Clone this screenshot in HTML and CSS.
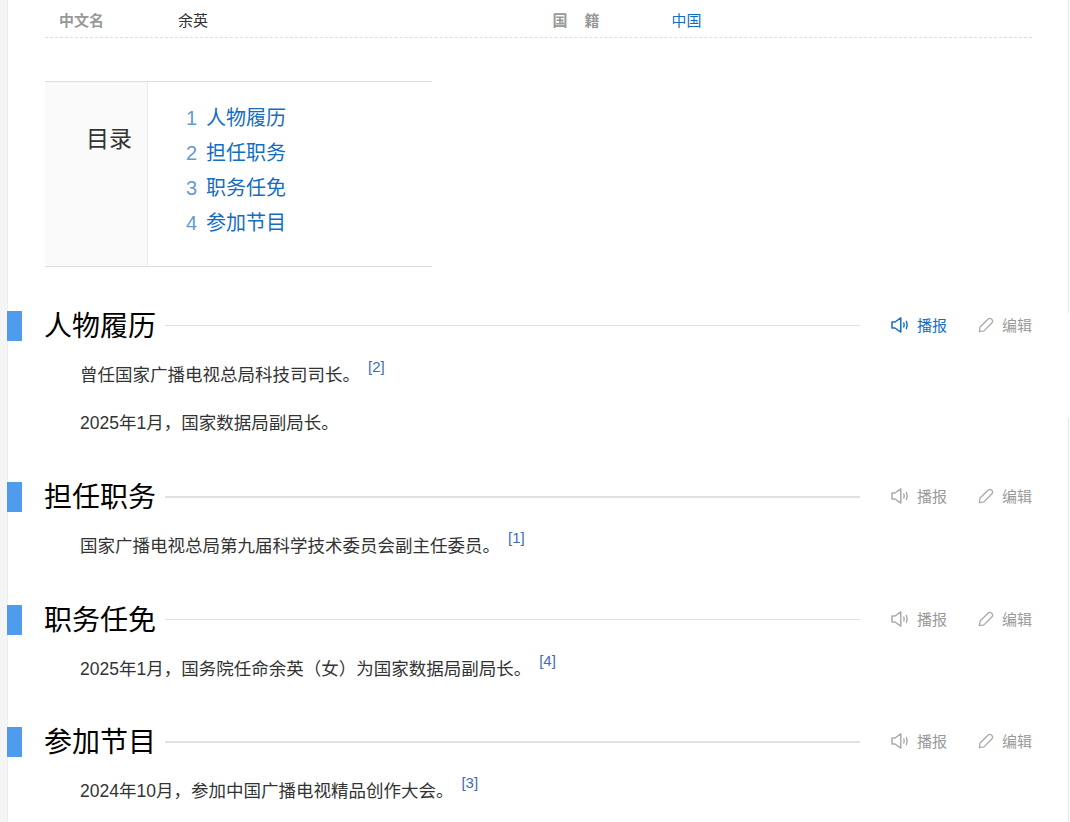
FILE: index.html
```html
<!DOCTYPE html>
<html lang="zh-CN">
<head>
  <meta charset="UTF-8" />
  <title>余英</title>
  <link rel="stylesheet" href="styles.css">
</head>
<body>
  <svg class="icon-defs" width="0" height="0">
    <symbol id="icon-sound" viewBox="0 0 18 16">
      <path d="M1 5h3L9.800 .9v14.200L4 11H1z" fill="none" stroke="currentColor" stroke-width="1.500" stroke-linejoin="round"/>
      <path d="M12.800 6c.5 1.300.5 2.700 0 4M15.400 4.400c1 2.300 1 4.900 0 7.200" fill="none" stroke="currentColor" stroke-width="1.400" stroke-linecap="round"/>
    </symbol>
    <symbol id="icon-edit" viewBox="0 0 16 16">
      <path d="M1.300 14.700L2.100 10 10 2.300a2.600 2.600 0 0 1 3.700 3.700L6 13.900z" fill="none" stroke="currentColor" stroke-width="1.300" stroke-linejoin="round"/>
    </symbol>
  </svg>

  <div class="edge edge-top"></div>
  <div class="edge edge-bottom"></div>

  <div class="page">
    <div class="basic-info">
      <div class="info-item">
        <span class="info-name">中文名</span>
        <span class="info-value">余英</span>
      </div>
      <div class="info-item">
        <span class="info-name">国<span class="name-gap"></span>籍</span>
        <a class="info-value link" href="#">中国</a>
      </div>
    </div>

    <div class="catalog">
      <div class="catalog-title">目录</div>
      <ol class="catalog-list">
        <li><span class="num">1</span><a href="#">人物履历</a></li>
        <li><span class="num">2</span><a href="#">担任职务</a></li>
        <li><span class="num">3</span><a href="#">职务任免</a></li>
        <li><span class="num">4</span><a href="#">参加节目</a></li>
      </ol>
    </div>

    <div class="section first">
      <div class="heading">
        <h2>人物履历</h2>
        <div class="rule"></div>
        <a class="tool active" href="#"><svg class="sound"><use href="#icon-sound"/></svg>播报</a>
        <a class="tool" href="#"><svg class="edit"><use href="#icon-edit"/></svg>编辑</a>
      </div>
      <p>曾任国家广播电视总局科技司司长。<sup>[2]</sup></p>
      <p>2025年1月，国家数据局副局长。</p>
    </div>

    <div class="section">
      <div class="heading">
        <h2>担任职务</h2>
        <div class="rule thick"></div>
        <a class="tool" href="#"><svg class="sound"><use href="#icon-sound"/></svg>播报</a>
        <a class="tool" href="#"><svg class="edit"><use href="#icon-edit"/></svg>编辑</a>
      </div>
      <p>国家广播电视总局第九届科学技术委员会副主任委员。<sup>[1]</sup></p>
    </div>

    <div class="section">
      <div class="heading">
        <h2>职务任免</h2>
        <div class="rule"></div>
        <a class="tool" href="#"><svg class="sound"><use href="#icon-sound"/></svg>播报</a>
        <a class="tool" href="#"><svg class="edit"><use href="#icon-edit"/></svg>编辑</a>
      </div>
      <p>2025年1月，国务院任命余英（女）为国家数据局副局长。<sup>[4]</sup></p>
    </div>

    <div class="section fourth">
      <div class="heading">
        <h2>参加节目</h2>
        <div class="rule thick"></div>
        <a class="tool" href="#"><svg class="sound"><use href="#icon-sound"/></svg>播报</a>
        <a class="tool" href="#"><svg class="edit"><use href="#icon-edit"/></svg>编辑</a>
      </div>
      <p>2024年10月，参加中国广播电视精品创作大会。<sup>[3]</sup></p>
    </div>
  </div>
</body>
</html>
```

FILE: styles.css
```css
* {
  box-sizing: border-box;
}

html, body {
  height: 100%;
}

body {
  margin: 0;
  background: #fff;
  overflow: hidden;
  font-family: Arial, "Liberation Sans", "Noto Sans CJK SC", sans-serif;
  color: #333;
}

a {
  text-decoration: none;
}

.icon-defs {
  position: absolute;
}

/* the cut off line on the right side of the window */
.edge {
  position: absolute;
  left: 1068px;
  width: 1px;
  background: #e6e6e6;
}

.edge-top {
  top: 0;
  height: 313px;
}

.edge-bottom {
  top: 418px;
  bottom: 0;
}

.page {
  height: 822px;
  margin-left: 7px;
  margin-right: 1px;
  padding-right: 37px;
  border-left: 1px solid #eee;
  box-shadow: -7px 0 0 #f5f5f5;
}

.basic-info {
  display: flex;
  height: 38px;
  margin-left: 37px;
  border-bottom: 1px dashed #ddd;
}

.info-item {
  display: flex;
  width: 494px;
  height: 37px;
  align-items: center;
  padding: 2px 0 0 14px;
  font-size: 15px;
}

.info-name {
  width: 119px;
  color: #999;
  font-weight: bold;
}

.name-gap {
  display: inline-block;
  width: 17px;
}

.info-value {
  color: #333;
}

.link {
  color: #136ec2;
}

.catalog {
  display: flex;
  width: 387px;
  height: 186px;
  margin: 43px 0 0 37px;
  border-top: 1px solid #ddd;
  border-bottom: 1px solid #ddd;
}

.catalog-title {
  width: 103px;
  padding: 42px 15px 0 0;
  background: #fafafa;
  border-right: 1px solid #eee;
  font-size: 23px;
  line-height: 30px;
  text-align: right;
}

.catalog-list {
  margin: 0;
  padding: 19px 0 0 38px;
  list-style: none;
  font-size: 20px;
  line-height: 35px;
}

.catalog-list a {
  color: #136ec2;
}

.num {
  display: inline-block;
  width: 20px;
  color: #6699cc;
}

.section {
  position: relative;
  margin-top: 42px;
}

.section::before {
  content: "";
  position: absolute;
  top: 0;
  left: -1px;
  width: 15px;
  height: 30px;
  background: #4f9cee;
}

.first {
  margin-top: 44px;
}

.fourth {
  margin-top: 41px;
}

.heading {
  display: flex;
  height: 30px;
  align-items: center;
  padding-left: 36px;
}

h2 {
  margin: 1px 9px 0 0;
  color: #000;
  font-size: 28px;
  font-weight: normal;
  line-height: 30px;
}

.rule {
  flex: 1;
  height: 1px;
  margin: 0 31px 2px 0;
  background: #e0e0e0;
}

.rule.thick {
  height: 2px;
  margin-bottom: 0;
}

.tool {
  display: flex;
  align-items: center;
  margin: 0 0 3px 31px;
  color: #999;
  font-size: 15px;
}

.rule + .tool {
  margin-left: 0;
}

.tool.active {
  color: #136ec2;
}

.tool svg {
  color: #aaa;
  margin-right: 8px;
}

.tool.active svg {
  color: #136ec2;
}

.sound {
  width: 18px;
  height: 16px;
}

.edit {
  width: 16px;
  height: 16px;
}

p {
  margin: 18px 0 0;
  padding-left: 72px;
  font-size: 17.5px;
  line-height: 33px;
}

p + p {
  margin-top: 15px;
}

sup {
  margin-left: 8px;
  color: #3f6cb4;
  font-size: 15px;
  line-height: 0;
  vertical-align: 9px;
}
```
